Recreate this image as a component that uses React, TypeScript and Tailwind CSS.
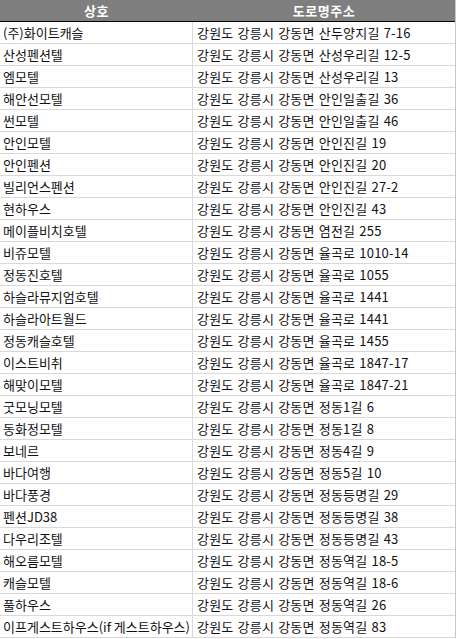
import React from 'react';

const rows: [string, string][] = [
  ['(주)화이트캐슬', '강원도 강릉시 강동면 산두양지길 7-16'],
  ['산성펜션텔', '강원도 강릉시 강동면 산성우리길 12-5'],
  ['엠모텔', '강원도 강릉시 강동면 산성우리길 13'],
  ['해안선모텔', '강원도 강릉시 강동면 안인일출길 36'],
  ['썬모텔', '강원도 강릉시 강동면 안인일출길 46'],
  ['안인모텔', '강원도 강릉시 강동면 안인진길 19'],
  ['안인펜션', '강원도 강릉시 강동면 안인진길 20'],
  ['빌리언스펜션', '강원도 강릉시 강동면 안인진길 27-2'],
  ['현하우스', '강원도 강릉시 강동면 안인진길 43'],
  ['메이플비치호텔', '강원도 강릉시 강동면 염전길 255'],
  ['비쥬모텔', '강원도 강릉시 강동면 율곡로 1010-14'],
  ['정동진호텔', '강원도 강릉시 강동면 율곡로 1055'],
  ['하슬라뮤지엄호텔', '강원도 강릉시 강동면 율곡로 1441'],
  ['하슬라아트월드', '강원도 강릉시 강동면 율곡로 1441'],
  ['정동캐슬호텔', '강원도 강릉시 강동면 율곡로 1455'],
  ['이스트비취', '강원도 강릉시 강동면 율곡로 1847-17'],
  ['해맞이모텔', '강원도 강릉시 강동면 율곡로 1847-21'],
  ['굿모닝모텔', '강원도 강릉시 강동면 정동1길 6'],
  ['동화정모텔', '강원도 강릉시 강동면 정동1길 8'],
  ['보네르', '강원도 강릉시 강동면 정동4길 9'],
  ['바다여행', '강원도 강릉시 강동면 정동5길 10'],
  ['바다풍경', '강원도 강릉시 강동면 정동등명길 29'],
  ['펜션JD38', '강원도 강릉시 강동면 정동등명길 38'],
  ['다우리조텔', '강원도 강릉시 강동면 정동등명길 43'],
  ['해오름모텔', '강원도 강릉시 강동면 정동역길 18-5'],
  ['캐슬모텔', '강원도 강릉시 강동면 정동역길 18-6'],
  ['풀하우스', '강원도 강릉시 강동면 정동역길 26'],
  ['이프게스트하우스(if 게스트하우스)', '강원도 강릉시 강동면 정동역길 83'],
];

const App: React.FC = () => {
  return (
    <div
      className="w-[457px] h-[639px] bg-white overflow-hidden text-[13px] text-[#111]"
      style={{ fontFamily: '"Malgun Gothic", "Noto Sans CJK KR", "Liberation Sans", sans-serif' }}
    >
      <div className="w-[456px] border-r border-[#c8c8c8]">
        {/* header */}
        <div className="flex h-[22px] bg-[#7f7f7f] border-b border-black text-white font-bold">
          <div className="w-[193px] flex items-center justify-center leading-none tracking-[0.5px]">상호</div>
          <div className="flex-1 flex items-center justify-center leading-none tracking-[0.5px]">도로명주소</div>
        </div>
        {rows.map(([name, addr], i) => (
          <div key={i} className="flex h-[22px] border-b border-[#d9d9d9]">
            <div className="w-[193px] border-r border-[#d9d9d9] pl-[3px] flex items-center whitespace-nowrap leading-none">
              {name}
            </div>
            <div className="flex-1 pl-[4px] flex items-center whitespace-nowrap leading-none [word-spacing:1px] tracking-[0.2px]">
              {addr}
            </div>
          </div>
        ))}
      </div>
    </div>
  );
};

export default App;
